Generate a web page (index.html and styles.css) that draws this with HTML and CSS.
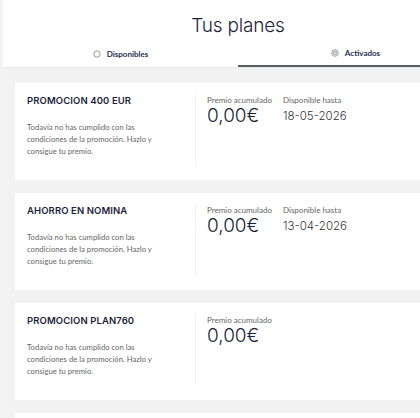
FILE: index.html
```html
<!DOCTYPE html>
<html lang="es">
<head>
<meta charset="utf-8">
<link rel="stylesheet" href="styles.css">
</head>
<body>
<div class="page">
  <div class="strip"></div>
  <main class="main">
    <header class="header">
      <h1 class="title">Tus planes</h1>
      <nav class="tabs">
        <div class="tab">
          <svg class="tab-icon" viewBox="0 0 8 8" width="8" height="8"><circle cx="4" cy="4" r="3.2" fill="none" stroke="#8a8d99" stroke-width="0.9"/></svg>
          <span>Disponibles</span>
        </div>
        <div class="tab tab-active">
          <svg class="tab-icon" viewBox="0 0 8 8" width="8" height="8"><circle cx="4" cy="4" r="3.3" fill="none" stroke="#8a8d99" stroke-width="0.8"/><circle cx="4" cy="4" r="1.9" fill="none" stroke="#8a8d99" stroke-width="0.8"/><circle cx="4" cy="4" r="0.7" fill="#8a8d99"/></svg>
          <span>Activados</span>
        </div>
      </nav>
    </header>
    <section class="list">
      <article class="card">
        <div class="card-left">
          <h2 class="card-title">PROMOCION 400 EUR</h2>
          <p class="card-desc">Todavía no has cumplido con las condiciones de la promoción. Hazlo y consigue tu premio.</p>
        </div>
        <div class="card-right">
          <div class="stat">
            <div class="stat-label">Premio acumulado</div>
            <div class="stat-amount">0,00€</div>
          </div>
          <div class="stat">
            <div class="stat-label">Disponible hasta</div>
            <div class="stat-date">18-05-2026</div>
          </div>
        </div>
      </article>
      <article class="card">
        <div class="card-left">
          <h2 class="card-title">AHORRO EN NOMINA</h2>
          <p class="card-desc">Todavía no has cumplido con las condiciones de la promoción. Hazlo y consigue tu premio.</p>
        </div>
        <div class="card-right">
          <div class="stat">
            <div class="stat-label">Premio acumulado</div>
            <div class="stat-amount">0,00€</div>
          </div>
          <div class="stat">
            <div class="stat-label">Disponible hasta</div>
            <div class="stat-date">13-04-2026</div>
          </div>
        </div>
      </article>
      <article class="card">
        <div class="card-left">
          <h2 class="card-title">PROMOCION PLAN760</h2>
          <p class="card-desc">Todavía no has cumplido con las condiciones de la promoción. Hazlo y consigue tu premio.</p>
        </div>
        <div class="card-right">
          <div class="stat">
            <div class="stat-label">Premio acumulado</div>
            <div class="stat-amount">0,00€</div>
          </div>
        </div>
      </article>
      <article class="card card-partial"></article>
    </section>
  </main>
</div>
</body>
</html>
```

FILE: styles.css
```css
html, body {
  margin: 0;
  padding: 0;
  background: #ffffff;
  overflow: hidden;
  height: 418px;
}
body {
  font-family: "Lato", "Liberation Sans", sans-serif;
  color: #1b1f3b;
}
.page {
  display: flex;
  height: 418px;
  overflow: hidden;
}
.strip {
  width: 3px;
  flex: none;
  background: #f3f3f3;
}
.main {
  width: 470px;
  flex: none;
}
.header {
  background: #fff;
  padding-top: 13px;
}
.title {
  margin: 0;
  text-align: center;
  font-family: "Inter", "Liberation Sans", sans-serif;
  font-weight: 300;
  font-size: 19px;
  line-height: 26px;
  color: #1b1f3b;
  letter-spacing: -0.2px;
}
.tabs {
  display: grid;
  grid-template-columns: 1fr 1fr;
  border-bottom: 1px solid #e8e8e8;
}
.tab {
  display: flex;
  align-items: center;
  justify-content: center;
  gap: 6px;
  height: 28px;
  font-size: 8px;
  font-weight: 700;
  color: #27304f;
  box-sizing: border-box;
  padding-top: 2px;
}
.tab-active {
  border-bottom: 2px solid #5c5e66;
  margin-bottom: -1px;
}
.tab-icon {
  display: block;
}
.list {
  background: #f2f2f2;
  padding: 15px 0 1px 12px;
  display: flex;
  flex-direction: column;
  gap: 13px;
}
.card {
  background: #fff;
  display: flex;
  align-items: flex-start;
  box-sizing: border-box;
  height: 97px;
  flex: none;
  padding: 11px 12px 15px 12px;
}
.card-left {
  width: 169px;
  height: 71px;
  box-sizing: border-box;
  flex: none;
  border-right: 1px solid #f0f0f0;
}
.card-title {
  margin: 0;
  font-family: "Inter", "Liberation Sans", sans-serif;
  font-size: 9.5px;
  font-weight: 600;
  line-height: 14px;
  color: #1b1f3b;
  letter-spacing: 0.1px;
}
.card-desc {
  margin: 13px 0 0 0;
  font-size: 7.7px;
  line-height: 12px;
  color: #666666;
  width: 142px;
}
.card-right {
  display: flex;
  gap: 11px;
  padding-left: 11px;
}
.stat-label {
  font-size: 8px;
  line-height: 12px;
  color: #666;
}
.stat-amount {
  font-family: "Inter", "Liberation Sans", sans-serif;
  font-weight: 300;
  font-size: 19px;
  line-height: 20px;
  color: #1b1f3b;
}
.stat-date {
  font-family: "Inter", "Liberation Sans", sans-serif;
  font-weight: 300;
  font-size: 11.5px;
  line-height: 21px;
  color: #333;
}
```
